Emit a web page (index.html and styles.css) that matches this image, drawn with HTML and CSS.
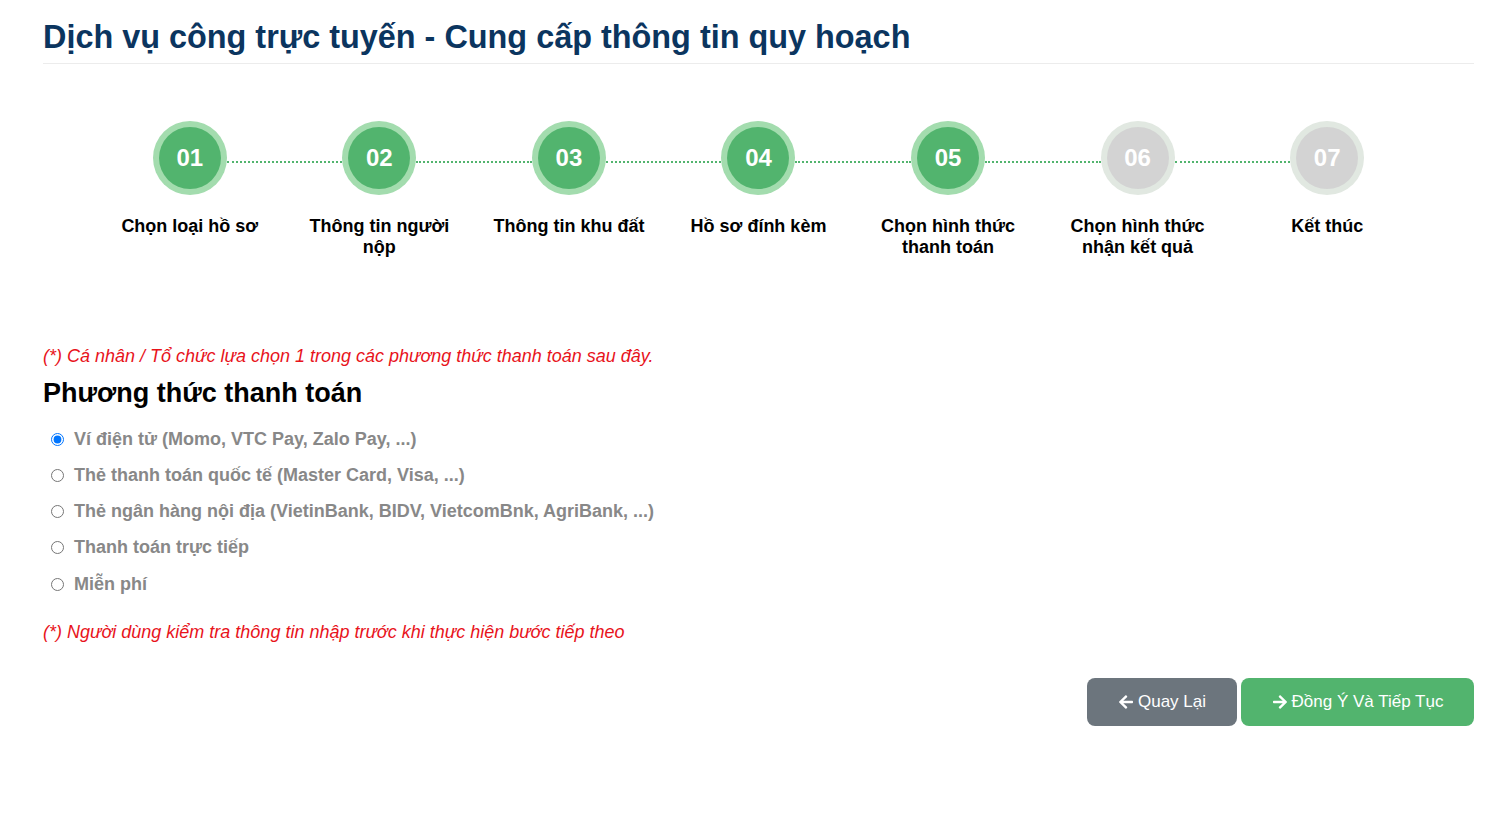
FILE: index.html
```html
<!DOCTYPE html>
<html lang="vi">
<head>
<meta charset="utf-8">
<title>Dịch vụ công trực tuyến</title>
<link rel="stylesheet" href="styles.css">
</head>
<body>
<div class="page">
  <h1 class="title">Dịch vụ công trực tuyến - Cung cấp thông tin quy hoạch</h1>

  <ol class="stepper">
    <li class="step done"><div class="circle"><span>01</span></div><div class="label">Chọn loại hồ sơ</div></li>
    <li class="step done"><div class="circle"><span>02</span></div><div class="label">Thông tin người nộp</div></li>
    <li class="step done"><div class="circle"><span>03</span></div><div class="label">Thông tin khu đất</div></li>
    <li class="step done"><div class="circle"><span>04</span></div><div class="label">Hồ sơ đính kèm</div></li>
    <li class="step done"><div class="circle"><span>05</span></div><div class="label">Chọn hình thức thanh toán</div></li>
    <li class="step todo"><div class="circle"><span>06</span></div><div class="label">Chọn hình thức nhận kết quả</div></li>
    <li class="step todo last"><div class="circle"><span>07</span></div><div class="label">Kết thúc</div></li>
  </ol>

  <p class="note note-top">(*) Cá nhân / Tổ chức lựa chọn 1 trong các phương thức thanh toán sau đây.</p>
  <h2 class="section-title">Phương thức thanh toán</h2>

  <div class="options">
    <label class="option"><input type="radio" name="pay" checked><span>Ví điện tử (Momo, VTC Pay, Zalo Pay, ...)</span></label>
    <label class="option"><input type="radio" name="pay"><span>Thẻ thanh toán quốc tế (Master Card, Visa, ...)</span></label>
    <label class="option"><input type="radio" name="pay"><span>Thẻ ngân hàng nội địa (VietinBank, BIDV, VietcomBnk, AgriBank, ...)</span></label>
    <label class="option"><input type="radio" name="pay"><span>Thanh toán trực tiếp</span></label>
    <label class="option"><input type="radio" name="pay"><span>Miễn phí</span></label>
  </div>

  <p class="note note-bottom">(*) Người dùng kiểm tra thông tin nhập trước khi thực hiện bước tiếp theo</p>

  <div class="actions">
    <button class="btn btn-back" type="button">
      <svg class="ico" viewBox="0 0 448 512" width="16" height="16"><path fill="currentColor" d="M257.5 445.1l-22.2 22.2c-9.4 9.4-24.6 9.4-33.9 0L7 273c-9.4-9.4-9.4-24.6 0-33.9L201.4 44.7c9.4-9.4 24.6-9.4 33.9 0l22.2 22.2c9.5 9.5 9.3 25-.4 34.3L136.6 216H424c13.3 0 24 10.7 24 24v32c0 13.3-10.7 24-24 24H136.6l120.5 114.8c9.8 9.3 10 24.8.4 34.3z"/></svg>
      Quay Lại
    </button>
    <button class="btn btn-next" type="button">
      <svg class="ico" viewBox="0 0 448 512" width="16" height="16"><path fill="currentColor" d="M190.5 66.9l22.2-22.2c9.4-9.4 24.6-9.4 33.9 0L441 239c9.4 9.4 9.4 24.6 0 33.9L246.6 467.3c-9.4 9.4-24.6 9.4-33.9 0l-22.2-22.2c-9.5-9.5-9.3-25 .4-34.3L311.4 296H24c-13.3 0-24-10.7-24-24v-32c0-13.3 10.7-24 24-24h287.4L190.9 101.2c-9.8-9.3-10-24.8-.4-34.3z"/></svg>
      Đồng Ý Và Tiếp Tục
    </button>
  </div>
</div>
</body>
</html>
```

FILE: styles.css
```css
* { box-sizing: border-box; }
html, body { margin: 0; padding: 0; background: #fff; }
body { font-family: "Liberation Sans", Arial, sans-serif; color: #000; }

.page {
  padding: 13px 37px 0 43px;
}

.title {
  margin: 0;
  padding: 6px 0 8px;
  font-size: 32.4px;
  line-height: 36px;
  font-weight: 700;
  color: #0b355f;
  border-bottom: 1px solid #ececec;
}

.stepper {
  list-style: none;
  margin: 57px 0 0;
  padding: 0 52px;
  display: grid;
  grid-template-columns: repeat(7, 1fr);
}
.step {
  position: relative;
  display: flex;
  flex-direction: column;
  align-items: center;
}
.step::after {
  content: "";
  position: absolute;
  top: 40px;
  left: calc(50% + 37px);
  width: calc(100% - 74px);
  border-top: 2px dotted #52b46e;
}
.step.last::after { display: none; }

.circle {
  width: 74px;
  height: 74px;
  border-radius: 50%;
  padding: 6px;
  background: #a3dcae;
}
.circle span {
  display: flex;
  width: 100%;
  height: 100%;
  border-radius: 50%;
  align-items: center;
  justify-content: center;
  background: #52b46e;
  color: #fff;
  font-size: 24px;
  font-weight: 700;
}
.todo .circle { background: #e1e8e1; }
.todo .circle span { background: #d3d3d3; }

.label {
  margin-top: 21px;
  max-width: 165px;
  text-align: center;
  font-size: 18px;
  line-height: 21px;
  font-weight: 700;
  color: #000;
}

.note {
  margin: 0;
  color: #e8131b;
  font-style: italic;
  font-size: 18px;
  line-height: 20px;
}
.note-top { margin-top: 88px; }

.section-title {
  margin: 11px 0 0;
  font-size: 27px;
  line-height: 32px;
  font-weight: 700;
}

.options {
  margin-top: 12px;
  display: flex;
  flex-direction: column;
  padding-left: 8px;
}
.option {
  display: flex;
  align-items: center;
  height: 36.25px;
  font-size: 18px;
  font-weight: 700;
  color: #888;
}
.option input {
  margin: 0 10px 0 0;
  width: 13px;
  height: 13px;
}

.note-bottom { margin-top: 20px; }

.actions {
  margin-top: 36px;
  display: flex;
  justify-content: flex-end;
  gap: 4px;
}
.btn {
  height: 48px;
  border: 0;
  border-radius: 8px;
  color: #fff;
  font-family: "Liberation Sans", Arial, sans-serif;
  font-size: 17px;
  display: inline-flex;
  align-items: center;
  justify-content: center;
  gap: 4px;
  cursor: pointer;
}
.btn-back { width: 150px; background: #6c757d; }
.btn-next { width: 233px; background: #52b46e; }
.ico { display: block; }
```
